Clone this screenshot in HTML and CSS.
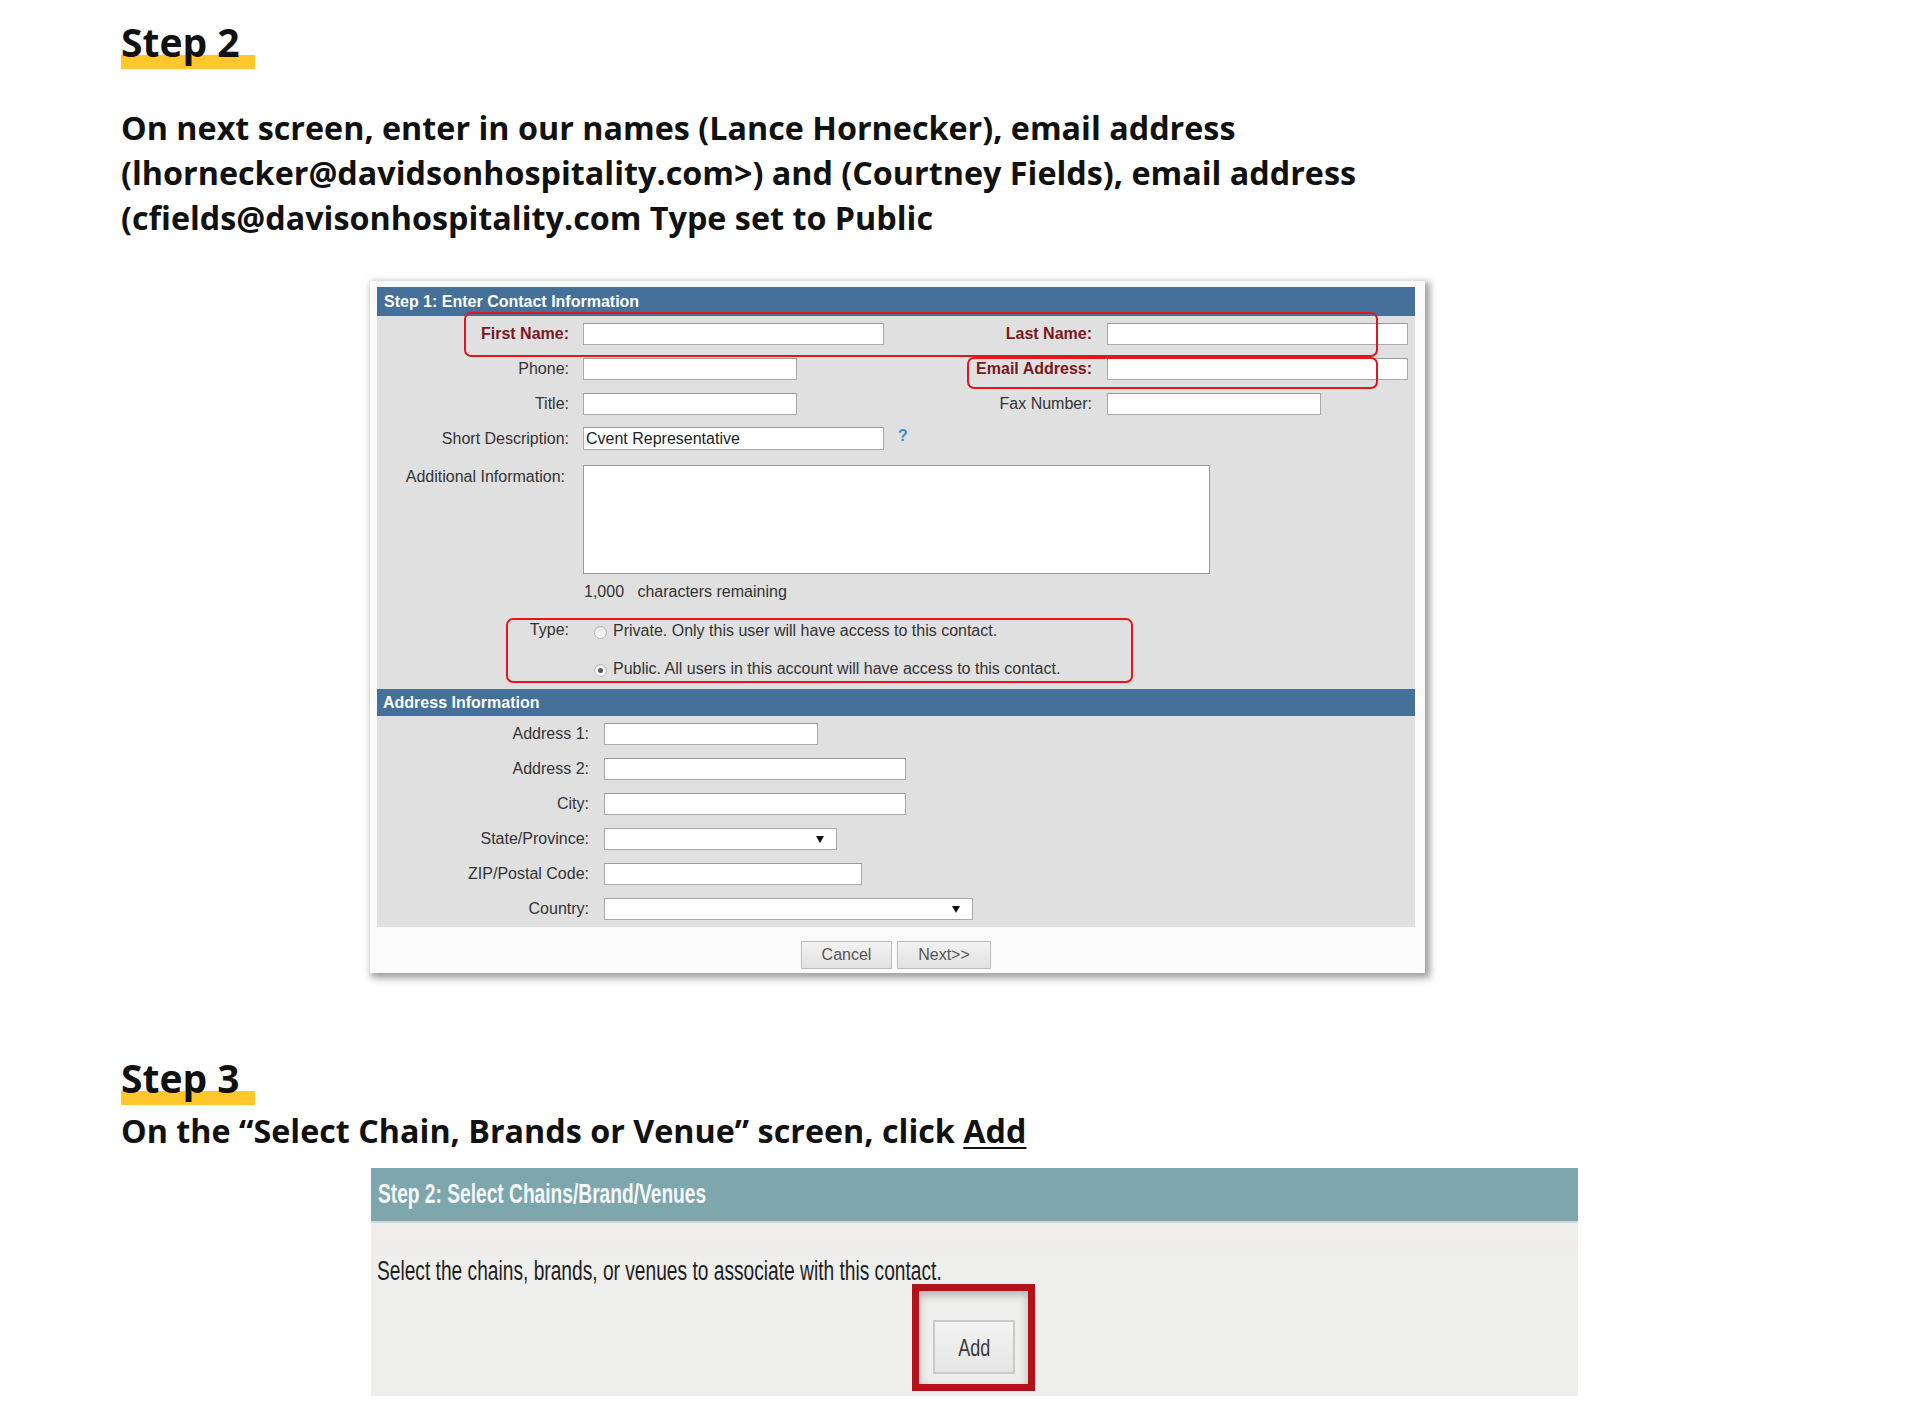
FILE: index.html
```html
<!DOCTYPE html>
<html lang="en">
<head>
    <meta charset="UTF-8">
    <title>Contact setup steps</title>
    <link rel="stylesheet" href="styles.css">
</head>
<body>
    <div class="doc">
        <h2 class="step"><span class="hl">Step 2</span></h2>
        <p class="instr">On next screen, enter in our names (Lance Hornecker), email address<br>(lhornecker@davidsonhospitality.com&gt;) and (Courtney Fields), email address<br>(cfields@davisonhospitality.com Type set to Public</p>

        <div class="shot">
            <div class="panel">
                <div class="bar">Step 1: Enter Contact Information</div>

                <div class="contact-grid">
                    <label class="lbl strong">First Name:</label>
                    <input class="field w301" type="text">
                    <label class="lbl lbl-right strong">Last Name:</label>
                    <input class="field w301" type="text">

                    <label class="lbl">Phone:</label>
                    <div class="cell"><input class="field w214" type="text"></div>
                    <label class="lbl lbl-right strong">Email Address:</label>
                    <input class="field w301" type="text">

                    <label class="lbl">Title:</label>
                    <div class="cell"><input class="field w214" type="text"></div>
                    <label class="lbl lbl-right">Fax Number:</label>
                    <div class="cell"><input class="field w214" type="text"></div>

                    <label class="lbl">Short Description:</label>
                    <div class="cell span3">
                        <input class="field w301" type="text" value="Cvent Representative">
                        <span class="help">?</span>
                    </div>
                </div>

                <div class="info-row">
                    <label class="lbl">Additional Information:</label>
                    <textarea class="notes"></textarea>
                </div>
                <div class="remaining">1,000&nbsp;&nbsp; characters remaining</div>

                <div class="type-block">
                    <div class="type-row">
                        <span class="lbl type-lbl">Type:</span>
                        <span class="radio"></span>
                        <span class="opt">Private. Only this user will have access to this contact.</span>
                    </div>
                    <div class="type-row">
                        <span class="lbl"></span>
                        <span class="radio on"></span>
                        <span class="opt">Public. All users in this account will have access to this contact.</span>
                    </div>
                </div>

                <div class="bar bar-addr">Address Information</div>

                <div class="addr-grid">
                    <label class="lbl">Address 1:</label>
                    <div class="cell"><input class="field w214" type="text"></div>
                    <label class="lbl">Address 2:</label>
                    <div class="cell"><input class="field w302" type="text"></div>
                    <label class="lbl">City:</label>
                    <div class="cell"><input class="field w302" type="text"></div>
                    <label class="lbl">State/Province:</label>
                    <div class="cell"><div class="select w233"><span class="arrow"></span></div></div>
                    <label class="lbl">ZIP/Postal Code:</label>
                    <div class="cell"><input class="field w258" type="text"></div>
                    <label class="lbl">Country:</label>
                    <div class="cell"><div class="select w369"><span class="arrow"></span></div></div>
                </div>

                <!-- red annotation boxes drawn on top of the screenshot -->
                <div class="mark mark-name"></div>
                <div class="mark mark-email"></div>
                <div class="mark mark-type"></div>
            </div>
            <div class="buttons">
                <button class="btn btn-cancel">Cancel</button>
                <button class="btn btn-next">Next&gt;&gt;</button>
            </div>
        </div>

        <h2 class="step step3"><span class="hl">Step 3</span></h2>
        <p class="instr instr3">On the “Select Chain, Brands or Venue” screen, click <u>Add</u></p>

        <div class="chains">
            <div class="chains-bar"><span class="narrow">Step 2: Select Chains/Brand/Venues</span></div>
            <div class="chains-body">
                <div class="chains-text"><span class="narrow">Select the chains, brands, or venues to associate with this contact.</span></div>
                <div class="add-mark">
                    <div class="add-btn"><span class="narrow">Add</span></div>
                </div>
            </div>
        </div>
    </div>
</body>
</html>
```

FILE: styles.css
```css
body {
    margin: 0;
    background: #fff;
    font-family: "Open Sans", "Noto Sans", sans-serif;
    color: #111;
}

.doc {
    padding-left: 121px;
}

/* headings with the yellow marker under them */
.step {
    margin: 16px 0 0;
    font-size: 39px;
    line-height: 52px;
    font-weight: 700;
}

.step3 {
    margin-top: 79px;
}

.hl {
    display: inline-block;
    padding: 0 15px 4px 0;
    background: linear-gradient(#ffc72c, #ffc72c) no-repeat 0 39px / 100% 14px;
}

.instr {
    margin: 33px 0 0;
    font-size: 32.3px;
    line-height: 45px;
    font-weight: 700;
    white-space: nowrap;
}

.instr3 {
    margin-top: 0;
}

.instr u {
    text-decoration-thickness: 2px;
    text-underline-offset: 4px;
}

/* screenshot of the contact form */
.shot {
    width: 1055px;
    margin: 41px 0 0 249px;
    padding: 6px 10px 0 7px;
    box-sizing: border-box;
    background: #fafafa;
    box-shadow: 3px 3px 7px 2px rgba(0, 0, 0, 0.38);
    font-family: "Liberation Sans", Arial, sans-serif;
    font-size: 16px;
    color: #333;
}

.panel {
    position: relative;
    background: #e0e0e0;
    padding-bottom: 1px;
}

.bar {
    height: 29px;
    line-height: 29px;
    padding-left: 7px;
    background: #45709a;
    color: #fff;
    font-weight: bold;
    font-size: 16px;
}

.bar-addr {
    height: 27px;
    line-height: 27px;
    padding-left: 6px;
}

.contact-grid {
    display: grid;
    grid-template-columns: 206px 301px 223px 301px;
    grid-auto-rows: 35px;
    align-items: center;
}

.lbl {
    text-align: right;
    padding-right: 14px;
    white-space: nowrap;
}

.lbl-right {
    padding-right: 15px;
}

.strong {
    font-weight: bold;
    color: #7a1822;
}

.cell {
    display: flex;
    align-items: center;
}

.span3 {
    grid-column: 2 / 5;
}

.field {
    box-sizing: border-box;
    height: 22px;
    margin: 0;
    padding: 0 2px;
    border: 1px solid #a9a9a9;
    border-top-color: #999;
    background: #fff;
    font-family: "Liberation Sans", Arial, sans-serif;
    font-size: 16px;
    color: #222;
}

.w214 { width: 214px; }
.w258 { width: 258px; }
.w301 { width: 301px; }
.w302 { width: 302px; }
.w233 { width: 233px; }
.w369 { width: 369px; }

.span3 .field {
    height: 23px;
}

.help {
    margin-left: 14px;
    margin-top: -6px;
    color: #3c8dc5;
    font-weight: bold;
    font-size: 16px;
}

.info-row {
    display: flex;
    align-items: flex-start;
    padding-top: 9px;
}

.info-row .lbl {
    width: 192px;
    padding-right: 18px;
    margin-left: -4px;
    padding-top: 3px;
}

.notes {
    box-sizing: border-box;
    width: 627px;
    height: 109px;
    margin: 0;
    border: 1px solid #999;
    background: #fff;
    resize: none;
}

.remaining {
    height: 34px;
    line-height: 36px;
    padding-left: 207px;
}

.type-block {
    padding: 8px 0 5px;
}

.type-row {
    display: flex;
    align-items: center;
    height: 30px;
}

.type-row + .type-row {
    margin-top: 8px;
}

.type-row .lbl {
    width: 192px;
}

.type-lbl {
    margin-top: -3px;
}

.radio {
    box-sizing: border-box;
    width: 13px;
    height: 13px;
    margin: 2px 6px 0 11px;
    border: 1px solid #b5b5b5;
    border-radius: 50%;
    background: linear-gradient(#e8e8e8, #fff);
    position: relative;
}

.radio.on::after {
    content: "";
    position: absolute;
    left: 3px;
    top: 3px;
    width: 5px;
    height: 5px;
    border-radius: 50%;
    background: #555;
}

.addr-grid {
    display: grid;
    grid-template-columns: 227px 1fr;
    grid-auto-rows: 35px;
    align-items: center;
}

.addr-grid .lbl {
    padding-right: 15px;
}

.select {
    box-sizing: border-box;
    height: 22px;
    border: 1px solid #a9a9a9;
    background: #fff;
    position: relative;
}

.arrow {
    position: absolute;
    right: 12px;
    top: 7px;
    width: 0;
    height: 0;
    border-left: 4px solid transparent;
    border-right: 4px solid transparent;
    border-top: 7px solid #111;
}

.mark {
    position: absolute;
    box-sizing: border-box;
    border: 2px solid #e3161e;
    border-radius: 7px;
}

.mark-name  { left: 87px;  top: 25px;  width: 914px; height: 45px; }
.mark-email { left: 590px; top: 70px;  width: 411px; height: 32px; }
.mark-type  { left: 129px; top: 331px; width: 627px; height: 65px; }

.buttons {
    display: flex;
    justify-content: center;
    gap: 5px;
    height: 46px;
    padding-top: 14px;
    box-sizing: border-box;
}

.btn {
    box-sizing: border-box;
    height: 28px;
    border: 1px solid #bdbdbd;
    background: linear-gradient(#f2f2f2, #e2e2e2);
    font-family: "Liberation Sans", Arial, sans-serif;
    font-size: 16px;
    color: #555;
    padding: 0;
}

.btn-cancel { width: 91px; }
.btn-next   { width: 94px; }

/* screenshot of the chains/brands step */
.chains {
    width: 1207px;
    margin: 15px 0 0 250px;
    font-family: "Liberation Sans", Arial, sans-serif;
}

.chains-bar {
    height: 53px;
    line-height: 53px;
    padding-left: 7px;
    background: #7ea6ad;
    border-bottom: 2px solid #c9dbde;
    color: #f4f7f8;
    font-size: 27px;
    font-weight: bold;
}

.narrow {
    display: inline-block;
    transform: scaleX(0.71);
    transform-origin: left center;
    white-space: nowrap;
}

.chains-body {
    height: 173px;
    padding-left: 6px;
    background: linear-gradient(#f1eded, #eeeeec 40px);
}

.chains-text {
    padding-top: 30px;
    height: 36px;
    line-height: 36px;
    font-size: 27px;
    color: #1e1e1e;
}

.chains-text .narrow {
    transform: scaleX(0.71);
}

.add-mark {
    box-sizing: border-box;
    width: 123px;
    height: 107px;
    margin: -5px 0 0 535px;
    padding: 29px 0 0 14px;
    border: 7px solid #b3121b;
    box-shadow: inset 0 4px 8px rgba(0, 0, 0, 0.25);
}

.add-btn {
    box-sizing: border-box;
    width: 82px;
    height: 54px;
    line-height: 52px;
    border: 2px solid #c9cbcb;
    background: linear-gradient(#f2f2f2, #e6e6e6);
    text-align: center;
    font-size: 24px;
    color: #3a3a3a;
}

.add-btn .narrow {
    transform: scaleX(0.75);
    transform-origin: center;
}
```
